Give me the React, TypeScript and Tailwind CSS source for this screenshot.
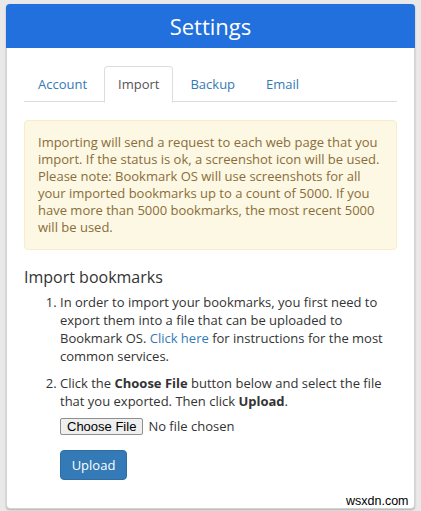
import React from 'react'

const tabs = ['Account', 'Import', 'Backup', 'Email']

const App = () => {
    return (
        <div className="relative min-h-[511px] bg-[#e9e9e9] pt-[4px] px-[6px] font-['Open_Sans',sans-serif] text-[13px] text-[#333]">
            <div className="w-[409px] rounded-[4px] bg-white border border-[#d3d3d3] shadow-[0_1px_2px_rgba(0,0,0,0.25)]">
                <div className="h-[44px] -mx-px -mt-px rounded-t-[4px] bg-[#2170de] flex items-center justify-center">
                    <h1 className="text-[22px] leading-none text-white">Settings</h1>
                </div>
                <div className="px-[17px] pt-[18px] pb-[28px]">
                    <ul className="flex border-b border-[#dddddd] h-[36px]">
                        {tabs.map((tab) => (
                            <li key={tab} className="mr-[3px] -mb-px">
                                {tab === 'Import' ? (
                                    <span className="flex items-center h-[37px] px-[13px] rounded-t-[4px] border border-[#dddddd] border-b-white bg-white text-[#555]">
                                        {tab}
                                    </span>
                                ) : (
                                    <span className="flex items-center h-[37px] px-[13px] border border-transparent text-[#337ab7]">
                                        {tab}
                                    </span>
                                )}
                            </li>
                        ))}
                    </ul>

                    <div className="mt-[18px] rounded-[4px] border border-[#faebcc] bg-[#fcf8e3] px-[13px] py-[13px] leading-[17px] text-[#8a6d3b]">
                        Importing will send a request to each web page that you import. If the status is ok, a
                        screenshot icon will be used. Please note: Bookmark OS will use screenshots for all your
                        imported bookmarks up to a count of 5000. If you have more than 5000 bookmarks, the most
                        recent 5000 will be used.
                    </div>

                    <h2 className="mt-[17px] text-[16px] leading-[20px]">Import bookmarks</h2>
                    <ol className="mt-[6px] list-decimal pl-[36px] leading-[18px]">
                        <li>
                            In order to import your bookmarks, you first need to export them into a file that can be
                            uploaded to Bookmark OS. <a className="text-[#337ab7]">Click here</a> for instructions for
                            the most common services.
                        </li>
                        <li className="mt-[9px]">
                            Click the <b>Choose File</b> button below and select the file that you exported. Then
                            click <b>Upload</b>.
                            <div className="mt-[8px] flex items-center gap-[5px]">
                                <span className="h-[17px] px-[6px] flex items-center border border-[#8f8f8f] rounded-[2px] bg-[#efefef] font-['Liberation_Sans',Arial,sans-serif] text-[13px] text-black">
                                    Choose File
                                </span>
                                <span className="-mt-[2px]">No file chosen</span>
                            </div>
                            <button className="mt-[15px] h-[30px] w-[67px] rounded-[4px] border border-[#2e6da4] bg-[#337ab7] text-white">
                                Upload
                            </button>
                        </li>
                    </ol>
                </div>
            </div>
            <span className="absolute left-[345px] top-[495px] bg-white px-[1px] font-['Liberation_Sans',Arial,sans-serif] text-[12.5px] leading-[13px] text-black">
                wsxdn.com
            </span>
        </div>
    )
}

export default App
